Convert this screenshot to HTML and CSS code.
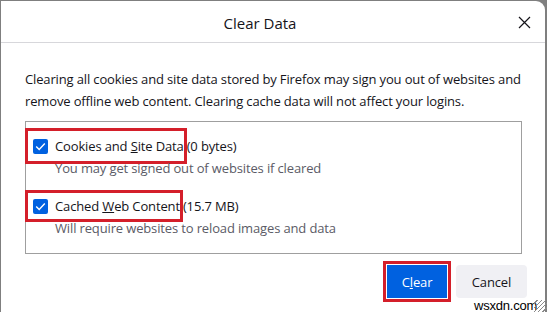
FILE: index.html
```html
<!DOCTYPE html>
<html>
<head>
<meta charset="utf-8">
<link rel="stylesheet" href="styles.css">
</head>
<body>
<div class="dialog">
  <div class="header">
    <div class="title">Clear Data</div>
    <button class="close" aria-label="Close">
      <svg width="13" height="13" viewBox="0 0 13 13"><path d="M1 1 L12 12 M12 1 L1 12" stroke="#15141a" stroke-width="1.2" fill="none"/></svg>
    </button>
  </div>
  <div class="content">
    <p class="intro">Clearing all cookies and site data stored by Firefox may sign you out of websites and remove offline web content. Clearing cache data will not affect your logins.</p>
    <div class="options">
      <div class="option">
        <div class="row"><span class="mark"><span class="check"><svg width="15" height="15" viewBox="0 0 15 15"><path d="M3.2 7.6 L6.2 10.6 L11.8 4.6" stroke="#fff" stroke-width="1.4" fill="none"/></svg></span><span class="label">Cookies and <u>S</u>ite Data</span></span><span class="size">(0 bytes)</span></div>
        <div class="sub">You may get signed out of websites if cleared</div>
      </div>
      <div class="option second">
        <div class="row"><span class="mark"><span class="check"><svg width="15" height="15" viewBox="0 0 15 15"><path d="M3.2 7.6 L6.2 10.6 L11.8 4.6" stroke="#fff" stroke-width="1.4" fill="none"/></svg></span><span class="label">Cached <u>W</u>eb Content</span></span><span class="size">(15.7 MB)</span></div>
        <div class="sub">Will require websites to reload images and data</div>
      </div>
    </div>
    <div class="buttons">
      <button class="btn primary">C<u>l</u>ear</button>
      <button class="btn secondary">Cancel</button>
    </div>
  </div>
  <div class="watermark">wsxdn.com</div>
  <div class="grip"></div>
</div>
</body>
</html>
```
FILE: styles.css
```css
html, body {
  margin: 0;
  padding: 0;
  width: 547px;
  height: 312px;
  overflow: hidden;
  background: #7f7f7f;
}
.dialog {
  position: relative;
  box-sizing: border-box;
  margin: 1px 0 0 1px;
  width: 544px;
  height: 320px;
  background: #fff;
  border-top-right-radius: 9px;
  font-family: "Open Sans", "Noto Sans", sans-serif;
  color: #15141a;
}
.header {
  position: relative;
  height: 41px;
  border-bottom: 1px solid #d7d7db;
  display: flex;
  align-items: center;
  justify-content: center;
}
.title {
  font-size: 15px;
  margin-right: 26px;
  margin-top: 2px;
}
.close {
  position: absolute;
  right: 14px;
  top: 15px;
  border: 0;
  background: none;
  padding: 0;
  width: 13px;
  height: 13px;
  display: block;
}
.close svg { display: block; }
.content {
  padding: 25px 18px 0 24px;
  font-size: 13px;
  letter-spacing: -0.14px;
}
.intro {
  margin: 0;
  line-height: 22px;
  width: 505px;
}
.options {
  margin-top: 9px;
  width: 495px;
  border: 1px solid #9f9f9f;
  padding: 13px 0 14px 0;
}
.option.second { margin-top: 16px; }
.row {
  display: flex;
  align-items: center;
  height: 22px;
  padding-left: 2px;
}
.mark {
  display: inline-flex;
  align-items: center;
  outline: 3px solid #d41f2a;
  outline-offset: 0;
  padding: 6px 0 6px 5px;
}
.second .mark { padding: 4px 0 4px 5px; }
.check {
  width: 15px;
  height: 15px;
  background: #0061e0;
  border-radius: 2px;
  display: inline-block;
  margin-right: 7px;
}
.check svg { display: block; }
.size { margin-left: 3px; }
.sub {
  line-height: 22px;
  padding-left: 29px;
  color: #5b5b66;
}
.buttons {
  display: flex;
  justify-content: flex-end;
  gap: 9px;
  margin-top: 11px;
}
.btn {
  font-family: inherit;
  font-size: 13px;
  letter-spacing: -0.14px;
  height: 33px;
  border: 0;
  border-radius: 4px;
  padding: 0;
}
.primary {
  width: 60px;
  background: #0061e0;
  color: #fff;
  outline: 3px solid #d41f2a;
  outline-offset: 1px;
  border-radius: 0;
}
.secondary {
  width: 71px;
  background: #f0f0f4;
  color: #15141a;
}
.watermark {
  position: absolute;
  left: 473px;
  top: 297px;
  font-family: "Liberation Sans", sans-serif;
  font-size: 13px;
  color: #000;
  background: #fff;
  letter-spacing: -0.2px;
}
.grip {
  position: absolute;
  left: 533px;
  top: 299px;
  width: 13px;
  height: 13px;
  background: repeating-linear-gradient(135deg, transparent 0 2px, #8a8a8a 2px 3px);
}
```
